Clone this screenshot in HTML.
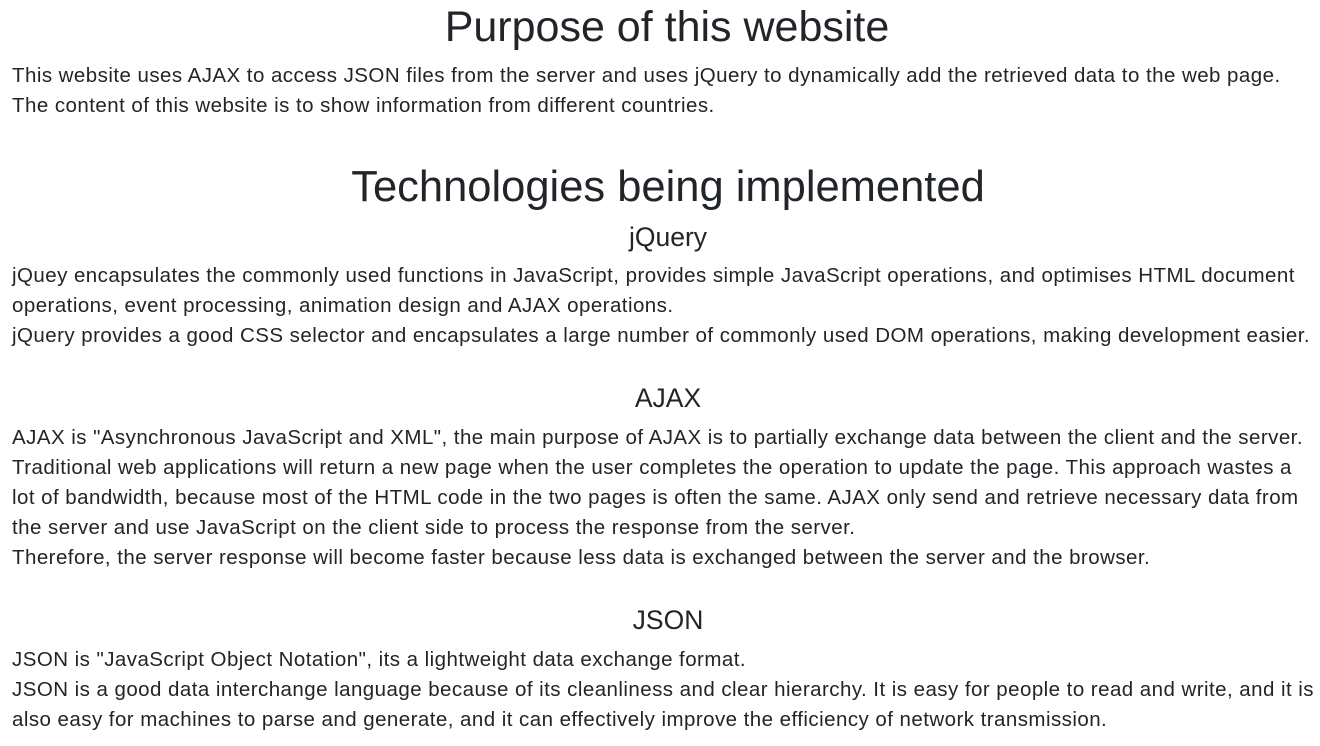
<!DOCTYPE html>
<html><head><meta charset="utf-8"><style>
body{margin:0;width:1320px;height:746px;background:#fff;color:#212529;font-family:"Liberation Sans",sans-serif;overflow:hidden;position:relative}
.t{position:absolute;left:0;width:1320px;text-align:center;line-height:1;white-space:nowrap}
.p{position:absolute;left:12px;font-size:20.5px;letter-spacing:0.45px;line-height:30px;white-space:nowrap}
</style></head><body>
<div class="t" style="top:6px;font-size:43px;left:7px">Purpose of this website</div>
<div class="p" style="top:61px">This website uses AJAX to access JSON files from the server and uses jQuery to dynamically add the retrieved data to the web page.<br>The content of this website is to show information from different countries.</div>
<div class="t" style="top:166px;font-size:43.5px;left:8px">Technologies being implemented</div>
<div class="t" style="top:224px;font-size:26.5px;left:8px">jQuery</div>
<div class="p" style="top:261px">jQuey encapsulates the commonly used functions in JavaScript, provides simple JavaScript operations, and optimises HTML document<br>operations, event processing, animation design and AJAX operations.<br>jQuery provides a good CSS selector and encapsulates a large number of commonly used DOM operations, making development easier.</div>
<div class="t" style="top:385px;font-size:26.5px;left:8px">AJAX</div>
<div class="p" style="top:423px">AJAX is "Asynchronous JavaScript and XML", the main purpose of AJAX is to partially exchange data between the client and the server.<br>Traditional web applications will return a new page when the user completes the operation to update the page. This approach wastes a<br>lot of bandwidth, because most of the HTML code in the two pages is often the same. AJAX only send and retrieve necessary data from<br>the server and use JavaScript on the client side to process the response from the server.<br>Therefore, the server response will become faster because less data is exchanged between the server and the browser.</div>
<div class="t" style="top:607px;font-size:26.5px;left:8px">JSON</div>
<div class="p" style="top:645px">JSON is "JavaScript Object Notation", its a lightweight data exchange format.<br>JSON is a good data interchange language because of its cleanliness and clear hierarchy. It is easy for people to read and write, and it is<br>also easy for machines to parse and generate, and it can effectively improve the efficiency of network transmission.</div>
</body></html>
